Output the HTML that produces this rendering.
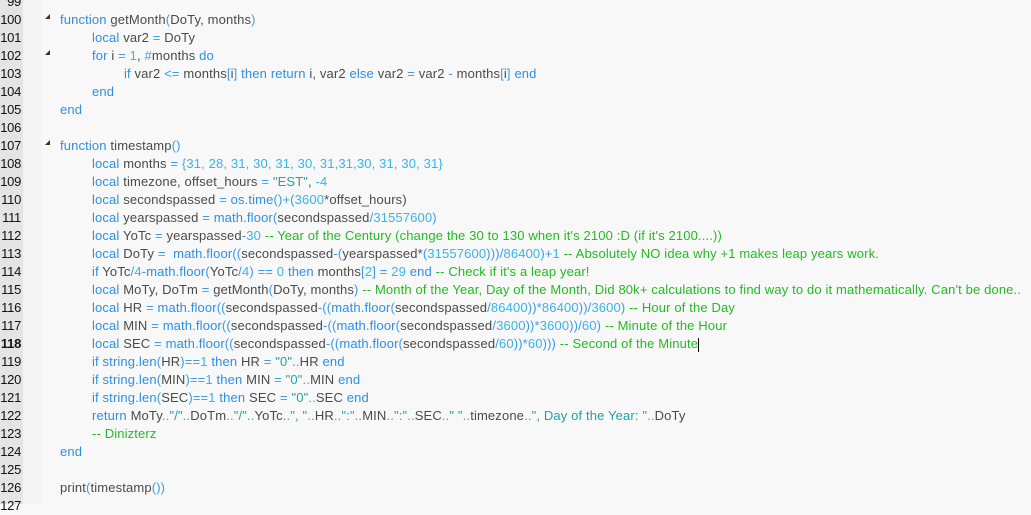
<!DOCTYPE html>
<html><head><meta charset="utf-8"><style>
body{margin:0;width:1031px;height:504px;overflow:hidden;background:#f8f8f8;font-family:"Liberation Sans","DejaVu Sans",sans-serif;font-size:13px;}
#g{position:absolute;left:0;top:0;width:23px;height:504px;background:#e4e4e4;}
#m{position:absolute;left:23px;top:0;width:18px;height:504px;background:#f3f3f3;}
.l{position:absolute;left:0;height:18px;line-height:18px;white-space:pre;color:#4a4a4a;letter-spacing:0.14px}
.n{position:absolute;left:0;width:21px;text-align:right;color:#111;height:18px;line-height:18px;letter-spacing:-0.3px}
.k{color:#2b8fe6}.f{color:#2b8fe6}.o{color:#3a9be8}.d{color:#35b5ea}.s{color:#1fa3a3}.c{color:#22bb22}
.t{position:absolute;left:45px;width:0;height:0;border-left:5px solid transparent;border-bottom:5px solid #333;}
.cur{display:inline-block;width:1px;height:14px;background:#000;vertical-align:middle}
</style></head><body>
<div id="g"></div><div id="m"></div>
<div class="t" style="top:14px"></div>
<div class="t" style="top:50px"></div>
<div class="t" style="top:140px"></div>
<div id="code"></div>
<script>
var lines=[
[0,''],
[0,'<span class="k">function</span> getMonth<span class="o">(</span>DoTy, months<span class="o">)</span>'],
[1,'<span class="k">local</span> var2 <span class="o">=</span> DoTy'],
[1,'<span class="k">for</span> i <span class="o">=</span> <span class="d">1</span>, <span class="o">#</span>months <span class="k">do</span>'],
[2,'<span class="k">if</span> var2 <span class="o">&lt;=</span> months<span class="o">[</span>i<span class="o">]</span> <span class="k">then</span> <span class="k">return</span> i, var2 <span class="k">else</span> var2 <span class="o">=</span> var2 <span class="o">-</span> months<span class="o">[</span>i<span class="o">]</span> <span class="k">end</span>'],
[1,'<span class="k">end</span>'],
[0,'<span class="k">end</span>'],
[0,''],
[0,'<span class="k">function</span> timestamp<span class="o">()</span>'],
[1,'<span class="k">local</span> months <span class="o">=</span> <span class="d">{31, 28, 31, 30, 31, 30, 31,31,30, 31, 30, 31}</span>'],
[1,'<span class="k">local</span> timezone, offset_hours <span class="o">=</span> <span class="s">"EST"</span>, <span class="d">-4</span>'],
[1,'<span class="k">local</span> secondspassed <span class="o">=</span> <span class="f">os.time</span><span class="o">()+(</span><span class="d">3600</span>*offset_hours)'],
[1,'<span class="k">local</span> yearspassed <span class="o">=</span> <span class="f">math.floor</span><span class="o">(</span>secondspassed<span class="o">/</span><span class="d">31557600</span><span class="o">)</span>'],
[1,'<span class="k">local</span> YoTc <span class="o">=</span> yearspassed<span class="o">-</span><span class="d">30</span> <span class="c">-- Year of the Century (change the 30 to 130 when it\'s 2100 :D (if it\'s 2100....))</span>'],
[1,'<span class="k">local</span> DoTy <span class="o">=</span>  <span class="f">math.floor</span><span class="o">((</span>secondspassed<span class="o">-(</span>yearspassed*<span class="o">(</span><span class="d">31557600</span><span class="o">)))/</span><span class="d">86400</span><span class="o">)+</span><span class="d">1</span> <span class="c">-- Absolutely NO idea why +1 makes leap years work.</span>'],
[1,'<span class="k">if</span> YoTc<span class="o">/</span><span class="d">4</span><span class="o">-</span><span class="f">math.floor</span><span class="o">(</span>YoTc<span class="o">/</span><span class="d">4</span><span class="o">)</span> <span class="o">==</span> <span class="d">0</span> <span class="k">then</span> months<span class="o">[</span><span class="d">2</span><span class="o">]</span> <span class="o">=</span> <span class="d">29</span> <span class="k">end</span> <span class="c">-- Check if it\'s a leap year!</span>'],
[1,'<span class="k">local</span> MoTy, DoTm <span class="o">=</span> getMonth<span class="o">(</span>DoTy, months<span class="o">)</span> <span class="c">-- Month of the Year, Day of the Month, Did 80k+ calculations to find way to do it mathematically. Can\'t be done..</span>'],
[1,'<span class="k">local</span> HR <span class="o">=</span> <span class="f">math.floor</span><span class="o">((</span>secondspassed<span class="o">-((</span><span class="f">math.floor</span><span class="o">(</span>secondspassed<span class="o">/</span><span class="d">86400</span><span class="o">))*</span><span class="d">86400</span><span class="o">))/</span><span class="d">3600</span><span class="o">)</span> <span class="c">-- Hour of the Day</span>'],
[1,'<span class="k">local</span> MIN <span class="o">=</span> <span class="f">math.floor</span><span class="o">((</span>secondspassed<span class="o">-((</span><span class="f">math.floor</span><span class="o">(</span>secondspassed<span class="o">/</span><span class="d">3600</span><span class="o">))*</span><span class="d">3600</span><span class="o">))/</span><span class="d">60</span><span class="o">)</span> <span class="c">-- Minute of the Hour</span>'],
[1,'<span class="k">local</span> SEC <span class="o">=</span> <span class="f">math.floor</span><span class="o">((</span>secondspassed<span class="o">-((</span><span class="f">math.floor</span><span class="o">(</span>secondspassed<span class="o">/</span><span class="d">60</span><span class="o">))*</span><span class="d">60</span><span class="o">)))</span> <span class="c">-- Second of the Minute</span><span class="cur"></span>'],
[1,'<span class="k">if</span> <span class="f">string.len</span><span class="o">(</span>HR<span class="o">)==</span><span class="d">1</span> <span class="k">then</span> HR <span class="o">=</span> <span class="s">"0"</span><span class="o">..</span>HR <span class="k">end</span>'],
[1,'<span class="k">if</span> <span class="f">string.len</span><span class="o">(</span>MIN<span class="o">)==</span><span class="d">1</span> <span class="k">then</span> MIN <span class="o">=</span> <span class="s">"0"</span><span class="o">..</span>MIN <span class="k">end</span>'],
[1,'<span class="k">if</span> <span class="f">string.len</span><span class="o">(</span>SEC<span class="o">)==</span><span class="d">1</span> <span class="k">then</span> SEC <span class="o">=</span> <span class="s">"0"</span><span class="o">..</span>SEC <span class="k">end</span>'],
[1,'<span class="k">return</span> MoTy<span class="o">..</span><span class="s">"/"</span><span class="o">..</span>DoTm<span class="o">..</span><span class="s">"/"</span><span class="o">..</span>YoTc<span class="o">..</span><span class="s">", "</span><span class="o">..</span>HR<span class="o">..</span><span class="s">":"</span><span class="o">..</span>MIN<span class="o">..</span><span class="s">":"</span><span class="o">..</span>SEC<span class="o">..</span><span class="s">" "</span><span class="o">..</span>timezone<span class="o">..</span><span class="s">", Day of the Year: "</span><span class="o">..</span>DoTy'],
[1,'<span class="c">-- Dinizterz</span>'],
[0,'<span class="k">end</span>'],
[0,''],
[0,'print<span class="o">(</span>timestamp<span class="o">())</span>'],
[0,'']
];
var h='';
for(var i=0;i<lines.length;i++){
 var y=-7+i*18, num=99+i;
 h+='<div class="n" style="top:'+y+'px'+(num==118?';font-weight:bold':'')+'">'+num+'</div>';
 h+='<div class="l" style="top:'+y+'px;left:'+(60+lines[i][0]*32)+'px">'+lines[i][1]+'</div>';
}
document.getElementById('code').innerHTML=h;
</script>
</body></html>
